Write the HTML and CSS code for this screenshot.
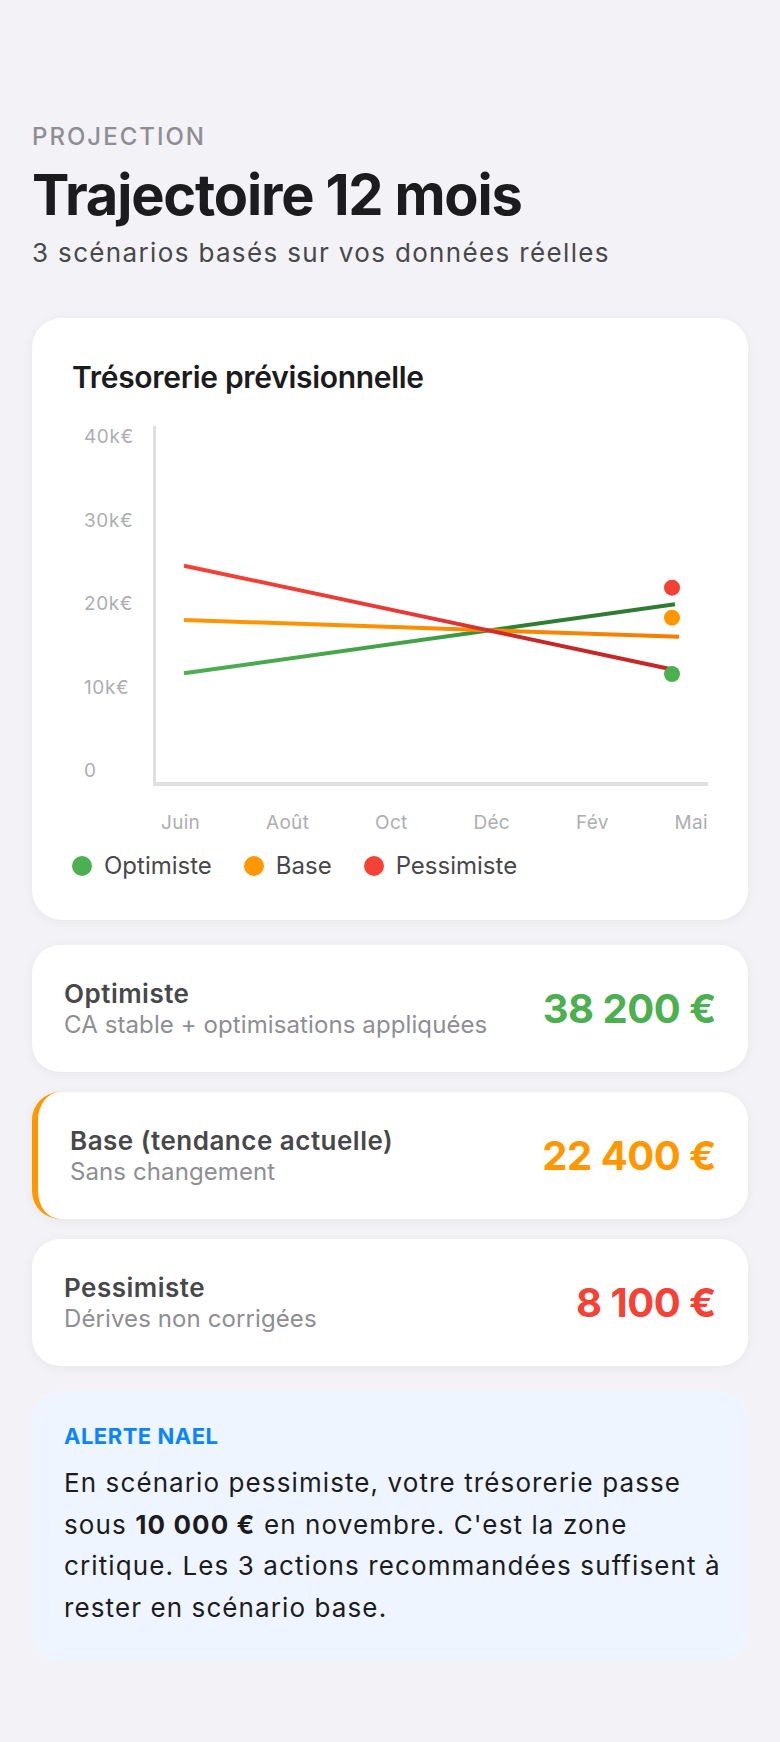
FILE: index.html
```html
<!DOCTYPE html>
<html lang="fr">
<head>
    <meta charset="UTF-8">
    <meta name="viewport" content="width=device-width, initial-scale=1.0">
    <title>Projection</title>
    <link rel="stylesheet" href="styles.css">
</head>
<body>
    <div class="page">
        <header class="header">
            <div class="eyebrow">PROJECTION</div>
            <h1 class="title">Trajectoire 12 mois</h1>
            <p class="subtitle">3 scénarios basés sur vos données réelles</p>
        </header>

        <section class="card chart-card">
            <h2 class="chart-title">Trésorerie prévisionnelle</h2>
            <div class="chart">
                <div class="y-axis">
                    <span>40k€</span>
                    <span>30k€</span>
                    <span>20k€</span>
                    <span>10k€</span>
                    <span>0</span>
                </div>
                <div class="plot">
                    <svg viewBox="0 0 552 356" preserveAspectRatio="none">
                        <defs>
                            <linearGradient id="g-green" gradientUnits="userSpaceOnUse" x1="28" y1="0" x2="519" y2="0">
                                <stop offset="0" stop-color="#4caf50"/>
                                <stop offset="0.5" stop-color="#43a047"/>
                                <stop offset="0.7" stop-color="#2e7d32"/>
                                <stop offset="1" stop-color="#2e7d32"/>
                            </linearGradient>
                            <linearGradient id="g-orange" gradientUnits="userSpaceOnUse" x1="28" y1="0" x2="523" y2="0">
                                <stop offset="0" stop-color="#ff9800"/>
                                <stop offset="0.55" stop-color="#fb8c00"/>
                                <stop offset="1" stop-color="#f57c00"/>
                            </linearGradient>
                            <linearGradient id="g-red" gradientUnits="userSpaceOnUse" x1="28" y1="0" x2="514" y2="0">
                                <stop offset="0" stop-color="#f44336"/>
                                <stop offset="0.5" stop-color="#e53935"/>
                                <stop offset="0.7" stop-color="#c62828"/>
                                <stop offset="1" stop-color="#c62828"/>
                            </linearGradient>
                        </defs>
                        <line x1="28" y1="247.3" x2="519" y2="178.3" stroke="url(#g-green)" stroke-width="4"/>
                        <line x1="28" y1="194" x2="523" y2="210.7" stroke="url(#g-orange)" stroke-width="4"/>
                        <line x1="28" y1="139.7" x2="514" y2="243" stroke="url(#g-red)" stroke-width="4"/>
                        <circle cx="516" cy="161.7" r="8" fill="#f44336"/>
                        <circle cx="516" cy="191.7" r="8" fill="#ff9800"/>
                        <circle cx="516" cy="248" r="8" fill="#4caf50"/>
                    </svg>
                </div>
            </div>
            <div class="x-axis">
                <span>Juin</span>
                <span>Août</span>
                <span>Oct</span>
                <span>Déc</span>
                <span>Fév</span>
                <span>Mai</span>
            </div>
            <div class="legend">
                <span class="legend-item"><i class="dot green"></i>Optimiste</span>
                <span class="legend-item"><i class="dot orange"></i>Base</span>
                <span class="legend-item"><i class="dot red"></i>Pessimiste</span>
            </div>
        </section>

        <section class="card scenario">
            <div class="scenario-text">
                <div class="scenario-name">Optimiste</div>
                <div class="scenario-desc">CA stable + optimisations appliquées</div>
            </div>
            <div class="scenario-value green-text">38 200 €</div>
        </section>

        <section class="card scenario current">
            <div class="scenario-text">
                <div class="scenario-name">Base (tendance actuelle)</div>
                <div class="scenario-desc">Sans changement</div>
            </div>
            <div class="scenario-value orange-text">22 400 €</div>
        </section>

        <section class="card scenario">
            <div class="scenario-text">
                <div class="scenario-name">Pessimiste</div>
                <div class="scenario-desc">Dérives non corrigées</div>
            </div>
            <div class="scenario-value red-text">8 100 €</div>
        </section>

        <section class="alert">
            <div class="alert-label">ALERTE NAEL</div>
            <p class="alert-text">En scénario pessimiste, votre trésorerie passe sous <b>10 000 €</b> en novembre. C'est la zone critique. Les 3 actions recommandées suffisent à rester en scénario base.</p>
        </section>
    </div>
</body>
</html>
```

FILE: styles.css
```css
body {
    margin: 0;
    background-color: #f2f2f7;
    font-family: Inter, "Noto Sans", sans-serif;
    color: #1c1c1e;
}

.page {
    padding: 122px 32px 80px;
}

.eyebrow {
    font-size: 24px;
    font-weight: 500;
    letter-spacing: 2px;
    color: #8e8e93;
    line-height: 29px;
}

.title {
    margin: 10px 0 0;
    font-size: 56px;
    font-weight: 700;
    letter-spacing: -1.2px;
    line-height: 68px;
    color: #1c1c1e;
}

.subtitle {
    margin: 8px 0 0;
    font-size: 26px;
    letter-spacing: 1.35px;
    line-height: 31px;
    color: #48484a;
}

.card {
    background-color: #fff;
    border-radius: 28px;
    box-shadow: 0 2px 12px rgba(0, 0, 0, 0.05);
}

.chart-card {
    margin-top: 50px;
    margin-bottom: 25px;
    padding: 41px 40px 40px;
    border-radius: 30px;
}

.chart-title {
    margin: 0 0 31px;
    font-size: 30px;
    font-weight: 600;
    line-height: 36px;
    letter-spacing: -0.3px;
    color: #1c1c1e;
}

.chart {
    display: flex;
    height: 360px;
}

.y-axis {
    width: 69px;
    padding: 0 0 4px 12px;
    display: flex;
    flex-direction: column;
    justify-content: space-between;
    font-size: 19px;
    letter-spacing: 0.6px;
    line-height: 22px;
    color: #aeaeb2;
}

.plot {
    flex: 1;
    border-left: 3px solid #e0e0e2;
    border-bottom: 4px solid #e0e0e2;
}

.plot svg {
    display: block;
    width: 100%;
    height: 100%;
}

.x-axis {
    margin: 25px 0 0 81px;
    padding-left: 8px;
    display: flex;
    justify-content: space-between;
    font-size: 19px;
    letter-spacing: 0.3px;
    line-height: 23px;
    color: #aeaeb2;
}

.legend {
    margin-top: 17px;
    display: flex;
    gap: 32px;
    font-size: 24px;
    line-height: 29px;
    color: #48484a;
}

.legend-item {
    display: flex;
    align-items: center;
    gap: 12px;
}

.dot {
    width: 20px;
    height: 20px;
    border-radius: 50%;
}

.dot.green { background-color: #4caf50; }
.dot.orange { background-color: #ff9800; }
.dot.red { background-color: #f44336; }

.scenario {
    display: flex;
    align-items: center;
    justify-content: space-between;
    padding: 33px 32px;
    margin-bottom: 20px;
}

.scenario.current {
    border-left: 6px solid #ff9800;
}

.scenario-name {
    font-size: 26px;
    font-weight: 600;
    letter-spacing: 0.5px;
    line-height: 31px;
    color: #48484a;
}

.scenario-desc {
    margin-top: 2px;
    font-size: 24px;
    letter-spacing: 0.1px;
    line-height: 28px;
    color: #8e8e93;
}

.scenario-value {
    font-size: 40px;
    font-weight: 700;
    letter-spacing: -0.5px;
}

.green-text { color: #4caf50; }
.orange-text { color: #ff9800; }
.red-text { color: #f44336; }

.alert {
    margin-top: 25px;
    padding: 32px 20px 34px 32px;
    background-color: #eef5fe;
    border-radius: 28px;
}

.alert-label {
    font-size: 22px;
    font-weight: 700;
    letter-spacing: 0.5px;
    line-height: 27px;
    color: #0a84ff;
}

.alert-text {
    margin: 12px 0 0;
    font-size: 26px;
    letter-spacing: 1.1px;
    line-height: 1.6;
    color: #1c1c1e;
}

.alert-text b {
    font-weight: 700;
}
```
